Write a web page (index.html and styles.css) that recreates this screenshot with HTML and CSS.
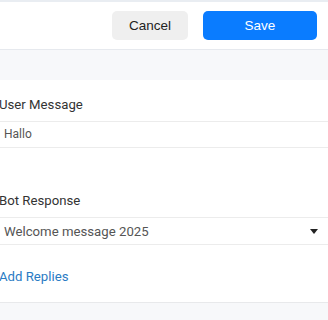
FILE: index.html
```html
<!DOCTYPE html>
<html lang="en">
	<head>
	<meta charset="UTF-8" />
	<meta name="viewport" content="width=device-width, initial-scale=1.0" />
	<title>Edit Rule</title>
	<link rel="stylesheet" href="styles.css">
	</head>
	<body>
		<div class="header">
			<button class="btn btn-cancel">Cancel</button>
			<button class="btn btn-save">Save</button>
		</div>
		<div class="band"></div>
		<div class="panel">
			<div class="field">
				<div class="label">User Message</div>
				<div class="input">Hallo</div>
			</div>
			<div class="field field-last">
				<div class="label">Bot Response</div>
				<div class="input select">
					<span>Welcome message 2025</span>
					<span class="caret"></span>
				</div>
			</div>
			<a class="add-link" href="#">Add Replies</a>
		</div>
	</body>
</html>
```

FILE: styles.css
```css
* {
	padding: 0;
	margin: 0;
	box-sizing: border-box;
}

body {
	background: #f7f8fa;
	font-family: Roboto, sans-serif;
}

.header {
	height: 50px;
	background: #fff;
	border-top: 2px solid #e9edf2;
	border-bottom: 1px solid #e6e9ee;
	display: flex;
	justify-content: flex-end;
	align-items: center;
	gap: 15px;
	padding-right: 11px;
}

.btn {
	height: 29px;
	border: none;
	border-radius: 5px;
	font-family: 'Liberation Sans', Arial, sans-serif;
	font-size: 13.5px;
}

.btn-cancel {
	width: 76px;
	background: #efefef;
	color: #222;
}

.btn-save {
	width: 114px;
	background: #0a7cff;
	color: #fff;
}

.band {
	height: 30px;
}

.panel {
	background: #fff;
	border-bottom: 1px solid #e8e9eb;
	padding: 15px 0 15px;
}

.field {
	margin-bottom: 43px;
}

.field-last {
	margin-bottom: 22px;
}

.label {
	font-size: 13.2px;
	line-height: 20px;
	color: #333;
	margin-left: -1px;
	padding-bottom: 6px;
}

.input {
	height: 27px;
	border-top: 1px solid #ececec;
	border-bottom: 1px solid #ececec;
	padding-left: 4px;
	font-size: 12px;
	line-height: 25px;
	color: #555;
}

.select {
	height: 28px;
	display: flex;
	justify-content: space-between;
	align-items: center;
	font-size: 13.2px;
	padding-right: 10px;
}

.caret {
	width: 0;
	height: 0;
	border-left: 4px solid transparent;
	border-right: 4px solid transparent;
	border-top: 5px solid #222;
}

.add-link {
	display: block;
	font-size: 13.2px;
	line-height: 20px;
	color: #2a7bc4;
	text-decoration: none;
	margin-left: -1px;
}
```
